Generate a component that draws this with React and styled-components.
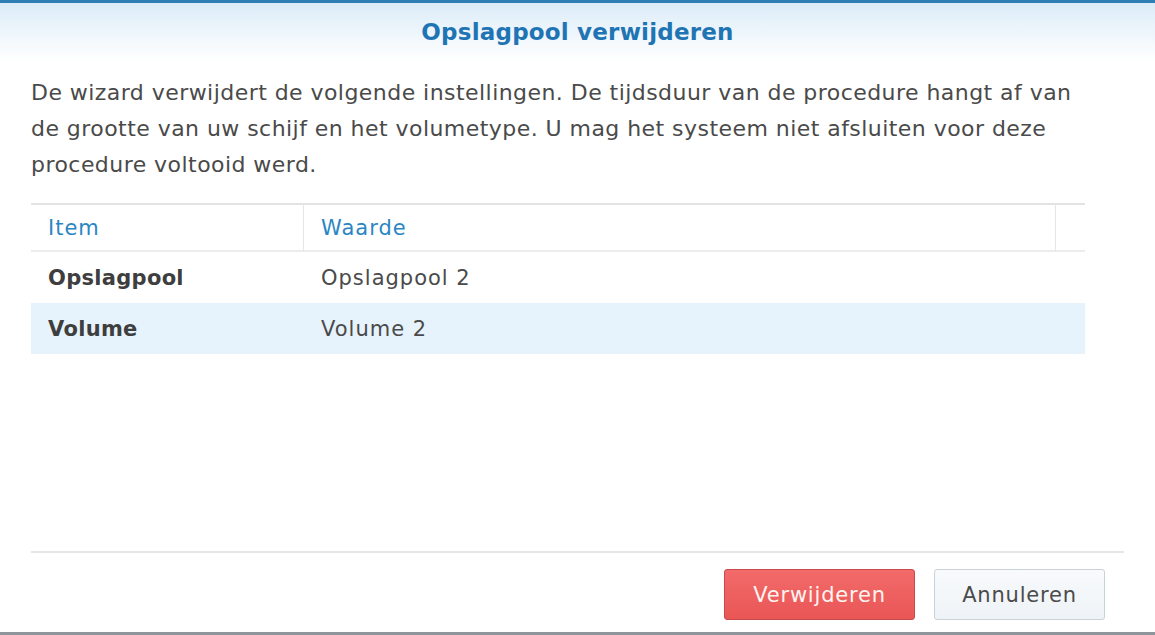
import React from "react";
import styled, { createGlobalStyle } from "styled-components";

const Global = createGlobalStyle`
    html, body {
        margin: 0;
        padding: 0;
        background: #ffffff;
    }
    body {
        font-family: "DejaVu Sans", Verdana, sans-serif;
    }
`

const Window = styled.div`
    width: 1155px;
    height: 635px;
    box-sizing: border-box;
    display: flex;
    flex-direction: column;
    border-top: 3px solid #2f7fb5;
    border-bottom: 3px solid #8e969c;
    background: #ffffff;
    overflow: hidden;
`

const Header = styled.div`
    height: 58px;
    display: flex;
    align-items: center;
    justify-content: center;
    background: linear-gradient(to bottom, #dcecf8 0%, #ffffff 100%);
    .title{
        font-size: 23px;
        font-weight: bold;
        color: #1f74b4;
        letter-spacing: 0.2px;
    }
`

const Body = styled.div`
    flex: 1;
    display: flex;
    flex-direction: column;
    padding: 14px 31px 0 31px;
`

const Intro = styled.p`
    margin: 0;
    width: 1075px;
    font-size: 22px;
    line-height: 36px;
    color: #4a4a4a;
    letter-spacing: 0.45px;
`

const Grid = styled.div`
    margin-top: 20px;
    width: 1054px;
    display: grid;
    grid-template-columns: 273px 752px 29px;
`

const HeadCell = styled.div`
    height: 45px;
    display: flex;
    align-items: center;
    padding-left: 17px;
    font-size: 21px;
    letter-spacing: 1px;
    color: #2a86c3;
    border-top: 2px solid #e3e3e3;
    border-bottom: 2px solid #ececec;
    border-right: ${p => p.$divider ? "1px solid #e6e6e6" : "none"};
`

const Cell = styled.div`
    height: 51px;
    display: flex;
    align-items: center;
    padding-left: 17px;
    font-size: 21px;
    letter-spacing: ${p => p.$bold ? "0.3px" : "1px"};
    color: ${p => p.$bold ? "#3e3e3e" : "#4a4a4a"};
    font-weight: ${p => p.$bold ? "bold" : "normal"};
    background: ${p => p.$selected ? "#e6f3fc" : "#ffffff"};
`

const Footer = styled.div`
    margin: 0 31px;
    border-top: 2px solid #e6e6e6;
    height: 63px;
    display: flex;
    justify-content: flex-end;
    align-items: flex-start;
    padding: 16px 19px 0 0;
    gap: 19px;
`

const Button = styled.button`
    height: 51px;
    width: ${p => p.$width}px;
    border-radius: 3px;
    font-family: "DejaVu Sans", Verdana, sans-serif;
    font-size: 21px;
    letter-spacing: 0.8px;
    border: 1px solid ${p => p.$danger ? "#c84a4a" : "#c9d1d9"};
    background: ${p => p.$danger ? "linear-gradient(#f26a6a, #ea5656)" : "linear-gradient(#f8fafc, #eef3f7)"};
    color: ${p => p.$danger ? "#fff4f0" : "#4b4b4b"};
`

const rows = [
    { item: "Opslagpool", value: "Opslagpool 2" },
    { item: "Volume", value: "Volume 2" },
]

export default function App() {
    return <>
        <Global />
        <Window>
            <Header>
                <span className="title">Opslagpool verwijderen</span>
            </Header>
            <Body>
                <Intro>
                    De wizard verwijdert de volgende instellingen. De tijdsduur van de procedure hangt af van de grootte van uw schijf en het volumetype. U mag het systeem niet afsluiten voor deze procedure voltooid werd.
                </Intro>
                <Grid>
                    <HeadCell $divider>Item</HeadCell>
                    <HeadCell $divider>Waarde</HeadCell>
                    <HeadCell />
                    {rows.map((r, i) => (
                        <React.Fragment key={r.item}>
                            <Cell $bold $selected={i === 1}>{r.item}</Cell>
                            <Cell $selected={i === 1}>{r.value}</Cell>
                            <Cell $selected={i === 1} />
                        </React.Fragment>
                    ))}
                </Grid>
            </Body>
            <Footer>
                <Button $danger $width={191}>Verwijderen</Button>
                <Button $width={171}>Annuleren</Button>
            </Footer>
        </Window>
    </>
}
